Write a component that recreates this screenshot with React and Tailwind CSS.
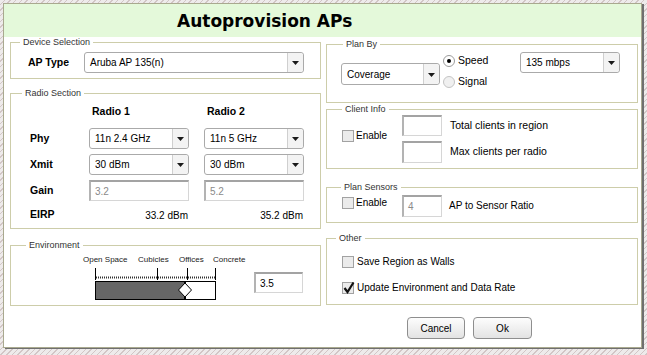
import React from "react";

function Arrow() {
  return (
    <svg width="7" height="4" viewBox="0 0 7 4">
      <path d="M0 0H7L3.5 4Z" fill="#1a1a1a" />
    </svg>
  );
}

function Select({ value, className }) {
  return (
    <div className={`flex rounded-[3px] border border-[#aaaaaa] bg-white ${className}`}>
      <div className="flex flex-1 items-center pl-[5px] text-[10px] text-black">{value}</div>
      <div className="flex w-[16px] items-center justify-center rounded-r-[3px] border-l border-[#cfcfcf] bg-[#f3f3f3] pt-[1px]">
        <Arrow />
      </div>
    </div>
  );
}

function Inset({ value, className, gray }) {
  return (
    <div
      className={`flex items-center border-t-2 border-l-2 border-r border-b border-t-[#a3a3a3] border-l-[#b3b3b3] border-r-[#d6d6d6] border-b-[#d6d6d6] bg-white pl-[4px] text-[10px] ${gray ? "text-[#8a8a8a]" : "text-black"} ${className}`}
    >
      {value}
    </div>
  );
}

function Check({ checked }) {
  return (
    <div className="relative h-[12px] w-[12px] border border-[#a2a2a2] bg-[#ebebeb]">
      {checked && (
        <svg className="absolute left-[0px] top-[-2px]" width="12" height="13" viewBox="0 0 12 13">
          <path d="M1.5 7L4.5 11L10.5 1.5" stroke="#111" strokeWidth="2.2" fill="none" />
        </svg>
      )}
    </div>
  );
}

function Radio({ on, faint }) {
  return (
    <div
      className={`flex h-[12px] w-[12px] items-center justify-center rounded-full border ${faint ? "border-[#c4c4c4] bg-[#f0f0f0]" : "border-[#9c9c9c] bg-white"}`}
    >
      {on && <div className="h-[4px] w-[4px] rounded-full bg-black" />}
    </div>
  );
}

function Legend({ children, className }) {
  return (
    <legend className={`px-[3px] text-[9px] leading-[11px] text-[#333333] ${className}`}>{children}</legend>
  );
}

export default function App() {
  return (
    <div className="h-[355px] w-[647px] overflow-hidden bg-[#e6e2e2] bg-[image:repeating-linear-gradient(135deg,#eeebeb_0px,#eeebeb_3px,#d2c6c6_3px,#d2c6c6_4px)] pl-[3px] pt-[3px] font-['Liberation_Sans',Arial,sans-serif]">
      <div className="flex h-[345px] w-[639px] flex-col border border-[#a9a98f] bg-white shadow-[2px_1px_0_#6f6f6f]">
        {/* Header */}
        <div className="flex h-[33px] items-center bg-[#e4f9da] pl-[173px]">
          <span className="font-['DejaVu_Sans',sans-serif] text-[17px] font-bold leading-[20px] text-black">
            Autoprovision APs
          </span>
        </div>

        {/* Body */}
        <div className="flex gap-[5px] pl-[6px]">
          {/* Left column */}
          <div className="flex w-[311px] flex-col">
            <fieldset className="h-[42px] border border-[#cdcdaa]">
              <Legend className="ml-[9px]">Device Selection</Legend>
              <div className="flex items-center pl-[17px] pt-[4px]">
                <div className="w-[56px] text-[10.5px] font-bold">AP Type</div>
                <Select value="Aruba AP 135(n)" className="h-[21px] w-[220px]" />
              </div>
            </fieldset>

            <fieldset className="mt-[9px] h-[141px] border border-[#cdcdaa]">
              <Legend className="ml-[11px]">Radio Section</Legend>
              <div className="flex flex-col pl-[19px] pt-[6px]">
                <div className="flex h-[14px] items-center text-[10.5px] font-bold">
                  <div className="w-[62px]" />
                  <div className="w-[115px]">Radio 1</div>
                  <div>Radio 2</div>
                </div>
                <div className="mt-[9px] flex h-[21px] items-center">
                  <div className="w-[59px] text-[10.5px] font-bold">Phy</div>
                  <Select value="11n 2.4 GHz" className="h-[21px] w-[100px]" />
                  <Select value="11n 5 GHz" className="ml-[15px] h-[21px] w-[100px]" />
                </div>
                <div className="mt-[5px] flex h-[21px] items-center">
                  <div className="w-[59px] text-[10.5px] font-bold">Xmit</div>
                  <Select value="30 dBm" className="h-[21px] w-[100px]" />
                  <Select value="30 dBm" className="ml-[15px] h-[21px] w-[100px]" />
                </div>
                <div className="mt-[5px] flex h-[21px] items-center">
                  <div className="w-[59px] text-[10.5px] font-bold">Gain</div>
                  <Inset value="3.2" gray className="h-[21px] w-[100px]" />
                  <Inset value="5.2" gray className="ml-[15px] h-[21px] w-[100px]" />
                </div>
                <div className="mt-[7px] flex h-[14px] items-center text-[10px]">
                  <div className="w-[59px] text-[10.5px] font-bold">EIRP</div>
                  <div className="w-[99px] text-right">33.2 dBm</div>
                  <div className="ml-[15px] w-[100px] text-right">35.2 dBm</div>
                </div>
              </div>
            </fieldset>

            <fieldset className="mt-[11px] h-[66px] border border-[#cdcdaa]">
              <Legend className="ml-[15px]">Environment</Legend>
              <div className="flex items-start pl-[69px] pt-[3px]">
                <div className="relative h-[47px] w-[170px]">
                  <span className="absolute left-[3px] top-0 text-[8px] leading-[11px] text-[#222]">Open Space</span>
                  <span className="absolute left-[58px] top-0 text-[8px] leading-[11px] text-[#222]">Cubicles</span>
                  <span className="absolute left-[99px] top-0 text-[8px] leading-[11px] text-[#222]">Offices</span>
                  <span className="absolute left-[133px] top-0 text-[8px] leading-[11px] text-[#222]">Concrete</span>
                  <svg className="absolute left-0 top-[13px]" width="170" height="34" viewBox="0 0 170 34">
                    <line x1="15.5" y1="1" x2="15.5" y2="13" stroke="#000" />
                    <line x1="77.5" y1="1" x2="77.5" y2="13" stroke="#000" />
                    <line x1="107.5" y1="1" x2="107.5" y2="13" stroke="#000" />
                    <line x1="135.5" y1="1" x2="135.5" y2="13" stroke="#000" />
                    <line x1="16" y1="10.5" x2="135" y2="10.5" stroke="#333" strokeWidth="2" strokeDasharray="1 1" />
                    <rect x="15.5" y="14.5" width="120" height="18" fill="#fff" stroke="#000" />
                    <rect x="16" y="15" width="89" height="17" fill="#666" />
                    <line x1="105" y1="14" x2="105" y2="33" stroke="#000" strokeWidth="2" />
                    <polygon points="105,16 111.5,23 105,30 98.5,23" fill="#fff" stroke="#000" />
                  </svg>
                </div>
                <Inset value="3.5" className="ml-[4px] mt-[18px] h-[21px] w-[49px]" />
              </div>
            </fieldset>
          </div>

          {/* Right column */}
          <div className="flex w-[312px] flex-col pt-[2px]">
            <fieldset className="h-[64px] border border-[#cdcdaa]">
              <Legend className="ml-[16px]">Plan By</Legend>
              <div className="flex items-start">
                <Select value="Coverage" className="ml-[14px] mt-[13px] h-[22px] w-[99px]" />
                <div className="ml-[3px] flex w-[77px] flex-col pt-[4px] text-[10.5px]">
                  <div className="flex h-[14px] items-center gap-[3px]">
                    <Radio on />
                    <span>Speed</span>
                  </div>
                  <div className="mt-[7px] flex h-[14px] items-center gap-[3px]">
                    <Radio faint />
                    <span>Signal</span>
                  </div>
                </div>
                <Select value="135 mbps" className="mt-[2px] h-[21px] w-[100px]" />
              </div>
            </fieldset>

            <fieldset className="mt-[1px] h-[65px] border border-[#cdcdaa]">
              <Legend className="ml-[15px]">Client Info</Legend>
              <div className="flex items-start">
                <div className="ml-[15px] mt-[15px] flex w-[60px] items-center gap-[2px] text-[10px]">
                  <Check />
                  <span className="leading-[12px]">Enable</span>
                </div>
                <div className="flex flex-col gap-[5px]">
                  <div className="flex items-center">
                    <Inset value="" className="h-[21px] w-[40px]" />
                    <span className="ml-[8px] text-[10.5px]">Total clients in region</span>
                  </div>
                  <div className="flex items-center">
                    <Inset value="" className="h-[22px] w-[40px]" />
                    <span className="ml-[8px] text-[10.5px]">Max clients per radio</span>
                  </div>
                </div>
              </div>
            </fieldset>

            <fieldset className="mt-[13px] h-[41px] border border-[#cdcdaa]">
              <Legend className="ml-[14px]">Plan Sensors</Legend>
              <div className="flex items-start">
                <div className="ml-[15px] mt-[4px] flex w-[60px] items-center gap-[2px] text-[10px]">
                  <Check />
                  <span className="leading-[12px]">Enable</span>
                </div>
                <Inset value="4" gray className="mt-[2px] h-[22px] w-[40px]" />
                <span className="ml-[7px] mt-[7px] text-[10px] leading-[12px]">AP to Sensor Ratio</span>
              </div>
            </fieldset>

            <fieldset className="mt-[10px] h-[72px] border border-[#cdcdaa]">
              <Legend className="ml-[9px]">Other</Legend>
              <div className="flex flex-col pl-[15px]">
                <div className="mt-[12px] flex items-center gap-[3px] text-[10px]">
                  <Check />
                  <span className="leading-[12px]">Save Region as Walls</span>
                </div>
                <div className="mt-[14px] flex items-center gap-[3px] text-[10px]">
                  <Check checked />
                  <span className="leading-[12px]">Update Environment and Data Rate</span>
                </div>
              </div>
            </fieldset>
          </div>
        </div>

        {/* Footer */}
        <div className="mt-[11px] flex gap-[8px] pl-[403px]">
          <button className="flex h-[22px] w-[58px] items-center justify-center rounded-[4px] border border-[#8e8e8e] bg-linear-to-b from-[#fdfdfd] to-[#e3e3e3] text-[10px] text-black">
            Cancel
          </button>
          <button className="flex h-[22px] w-[59px] items-center justify-center rounded-[4px] border border-[#8e8e8e] bg-linear-to-b from-[#fdfdfd] to-[#e3e3e3] text-[10px] text-black">
            Ok
          </button>
        </div>
      </div>
    </div>
  );
}
